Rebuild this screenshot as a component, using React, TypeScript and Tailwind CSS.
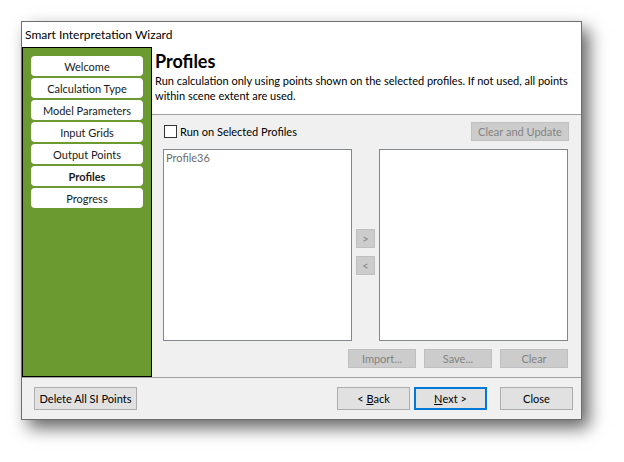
import React from "react";

const font = { fontFamily: 'Lato, "Segoe UI", sans-serif' };

function NavItem({ label, active }: { label: string; active?: boolean }) {
  return (
    <div
      className={`h-[20px] w-[112px] rounded-[4px] bg-white flex items-center justify-center text-[11px] leading-none whitespace-nowrap text-[#1a1a1a] ${
        active ? "font-bold" : ""
      }`}
    >
      {label}
    </div>
  );
}

function DisabledBtn({ label, w }: { label: string; w: string }) {
  return (
    <div
      className={`${w} h-[19px] border border-[#bfbfbf] bg-[#cccccc] flex items-center justify-center text-[11px] leading-none whitespace-nowrap text-[#838383]`}
    >
      {label}
    </div>
  );
}

const btn =
  "h-[23px] w-[73px] border border-[#adadad] bg-[#e1e1e1] flex items-center justify-center text-[11px] leading-none whitespace-nowrap text-black";

export default function App() {
  const nav = [
    "Welcome",
    "Calculation Type",
    "Model Parameters",
    "Input Grids",
    "Output Points",
    "Profiles",
    "Progress",
  ];
  return (
    <div className="w-[624px] h-[462px] bg-white pt-[21px] pl-[21px]" style={font}>
      <div className="w-[561px] h-[399px] border border-[#6e6e6e] bg-[#f0f0f0] flex flex-col shadow-[7px_8px_16px_rgba(0,0,0,0.6)]">
        {/* title bar */}
        <div className="h-[25px] bg-white flex items-center pl-[3px] text-[12px] whitespace-nowrap text-black shrink-0">
          Smart Interpretation Wizard
        </div>
        {/* main */}
        <div className="flex h-[330px] shrink-0">
          <div className="w-[130px] h-[330px] border border-black bg-[#6a9a30] flex flex-col items-center pt-[8px] gap-[2px] shrink-0">
            {nav.map((n) => (
              <NavItem key={n} label={n} active={n === "Profiles"} />
            ))}
          </div>
          <div className="flex-1 min-w-0 flex flex-col">
            <div className="h-[68px] bg-white border-b border-[#a0a0a0] pl-[3px] pt-[3px] shrink-0 overflow-hidden">
              <div className="text-[18px] font-bold leading-[23px] text-black">Profiles</div>
              <div className="text-[11px] leading-[15px] text-black whitespace-nowrap">
                Run calculation only using points shown on the selected profiles. If not used, all points
                <br />
                within scene extent are used.
              </div>
            </div>
            <div className="flex-1 flex flex-col pl-[11px] pr-[12px] pt-[7px]">
              <div className="flex items-center justify-between h-[19px]">
                <div className="flex items-center gap-[3px] pl-[1px]">
                  <div className="w-[13px] h-[13px] border border-[#333333] bg-white" />
                  <span className="text-[11px] leading-none whitespace-nowrap text-black">Run on Selected Profiles</span>
                </div>
                <DisabledBtn label="Clear and Update" w="w-[98px]" />
              </div>
              <div className="flex mt-[8px] h-[192px]">
                <div className="w-[189px] h-[192px] border border-[#828790] bg-white px-[2px] text-[11px] leading-[16px] text-[#6d6d6d]">
                  Profile36
                </div>
                <div className="w-[27px] flex flex-col items-center justify-center gap-[8px] pt-[14px]">
                  <div className="w-[19px] h-[19px] border border-[#bfbfbf] bg-[#cccccc] flex items-center justify-center text-[11px] leading-none text-[#838383]">
                    &gt;
                  </div>
                  <div className="w-[19px] h-[19px] border border-[#bfbfbf] bg-[#cccccc] flex items-center justify-center text-[11px] leading-none text-[#838383]">
                    &lt;
                  </div>
                </div>
                <div className="w-[189px] h-[192px] border border-[#828790] bg-white" />
              </div>
              <div className="flex justify-end gap-[8px] mt-[8px] pr-[1px]">
                <DisabledBtn label="Import..." w="w-[68px]" />
                <DisabledBtn label="Save..." w="w-[68px]" />
                <DisabledBtn label="Clear" w="w-[68px]" />
              </div>
            </div>
          </div>
        </div>
        {/* footer */}
        <div className="flex-1 border-t border-[#a0a0a0] flex items-center pl-[12px] pr-[8px]">
          <div className="h-[23px] w-[103px] border border-[#adadad] bg-[#e1e1e1] flex items-center justify-center text-[11px] leading-none whitespace-nowrap text-black">
            Delete All SI Points
          </div>
          <div className="flex-1" />
          <div className="flex items-center gap-[4px]">
            <div className={btn}>
              &lt;&nbsp;<span className="underline">B</span>ack
            </div>
            <div className="h-[23px] w-[73px] border-2 border-[#0078d7] bg-[#e1e1e1] flex items-center justify-center text-[11px] leading-none whitespace-nowrap text-black">
              <span className="underline">N</span>ext &gt;
            </div>
            <div className={`${btn} ml-[9px]`}>Close</div>
          </div>
        </div>
      </div>
    </div>
  );
}
